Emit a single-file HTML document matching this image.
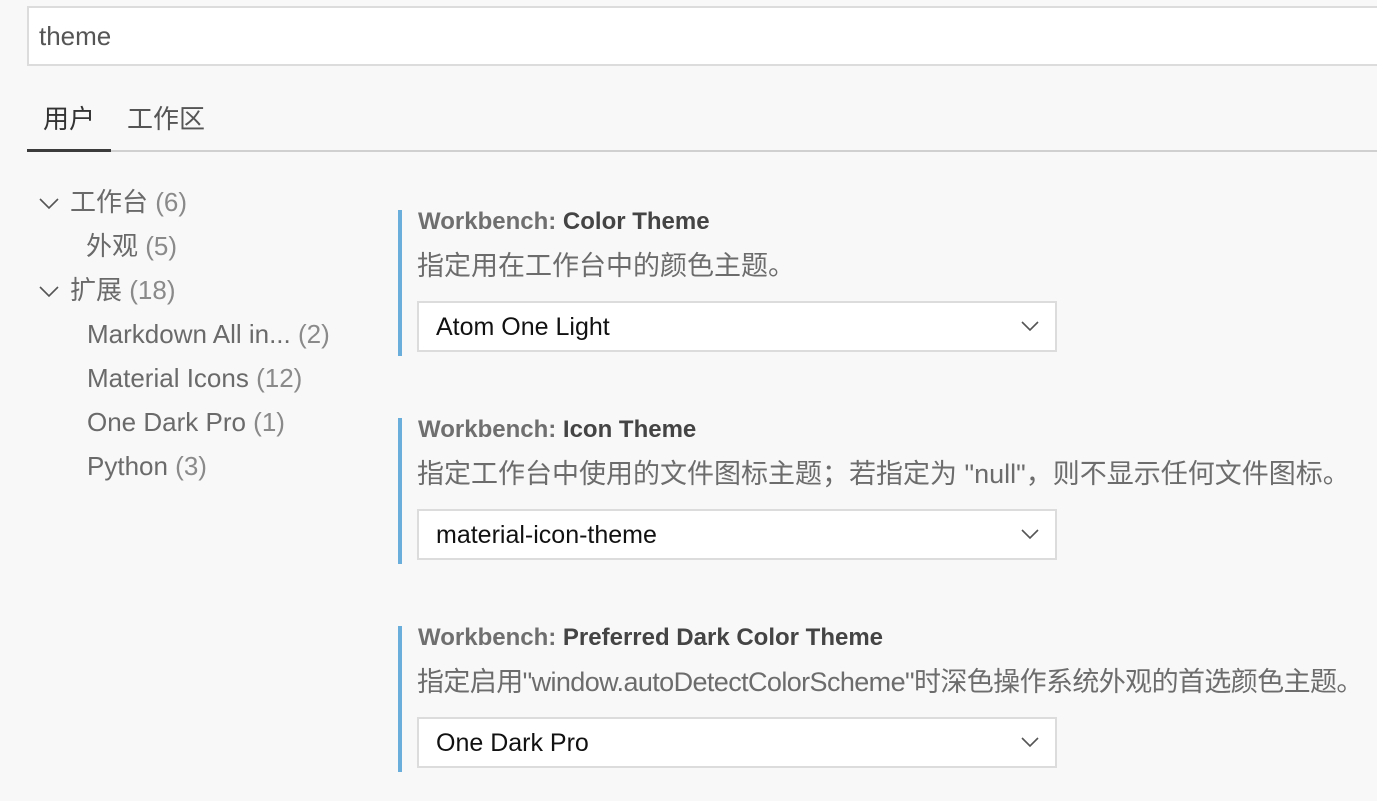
<!DOCTYPE html>
<html><head><meta charset="utf-8"><style>
*{margin:0;padding:0;box-sizing:border-box}
body{width:1377px;height:801px;background:#f8f8f8;font-family:"Liberation Sans","Noto Sans CJK SC",sans-serif;overflow:hidden;position:relative;color:#616161}
.a{position:absolute;white-space:nowrap;line-height:1.2}
.search{left:27px;top:6px;width:1360px;height:60px;background:#fff;border:2px solid #dcdcdc}
.search span{position:absolute;left:10px;top:13px;font-size:26px;color:#555}
.tab{font-size:26px;top:104px}
.tree{font-size:26px;color:#6a6a6a}
.tree .c{color:#8a8a8a}
.bar{left:398px;width:4px;background:#6aaedc;height:146px}
.title{font-size:24px;font-weight:bold;color:#444;left:418px}
.title span{color:#6f6f6f}
.desc{font-size:27px;color:#6c6c6c;left:417px}
.sel{left:417px;width:640px;height:51px;background:#fff;border:2px solid #dcdcdc;font-size:25px;color:#111}
.sel span{position:absolute;left:17px;top:9px}
.sel svg{position:absolute;right:16px;top:17px}
.chev{position:absolute}
</style></head><body>
<div class="a search"><span>theme</span></div>
<div class="a tab" style="left:43px;color:#333">用户</div>
<div class="a tab" style="left:127px;color:#555">工作区</div>
<div class="a" style="left:27px;top:150px;width:1350px;height:2px;background:#d0d0d0"></div>
<div class="a" style="left:27px;top:149px;width:84px;height:3px;background:#3c3c3c"></div>

<svg class="chev" style="left:38px;top:197px" width="22" height="14"><path d="M2 2 L11 11 L20 2" fill="none" stroke="#555" stroke-width="1.6"/></svg>
<div class="a tree" style="left:70px;top:187px">工作台 <span class="c">(6)</span></div>
<div class="a tree" style="left:86px;top:231px">外观 <span class="c">(5)</span></div>
<svg class="chev" style="left:38px;top:285px" width="22" height="14"><path d="M2 2 L11 11 L20 2" fill="none" stroke="#555" stroke-width="1.6"/></svg>
<div class="a tree" style="left:70px;top:275px">扩展 <span class="c">(18)</span></div>
<div class="a tree" style="left:87px;top:319px">Markdown All in... <span class="c">(2)</span></div>
<div class="a tree" style="left:87px;top:363px">Material Icons <span class="c">(12)</span></div>
<div class="a tree" style="left:87px;top:407px">One Dark Pro <span class="c">(1)</span></div>
<div class="a tree" style="left:87px;top:451px">Python <span class="c">(3)</span></div>

<div class="a bar" style="top:210px"></div>
<div class="a title" style="top:208px"><span>Workbench: </span>Color Theme</div>
<div class="a desc" style="top:250px">指定用在工作台中的颜色主题。</div>
<div class="a sel" style="top:301px"><span>Atom One Light</span><svg width="18" height="12"><path d="M1 2 L9 10 L17 2" fill="none" stroke="#555" stroke-width="1.6"/></svg></div>

<div class="a bar" style="top:418px"></div>
<div class="a title" style="top:416px"><span>Workbench: </span>Icon Theme</div>
<div class="a desc" style="top:458px">指定工作台中使用的文件图标主题；若指定为 "null"，则不显示任何文件图标。</div>
<div class="a sel" style="top:509px"><span>material-icon-theme</span><svg width="18" height="12"><path d="M1 2 L9 10 L17 2" fill="none" stroke="#555" stroke-width="1.6"/></svg></div>

<div class="a bar" style="top:626px"></div>
<div class="a title" style="top:624px"><span>Workbench: </span>Preferred Dark Color Theme</div>
<div class="a desc" style="top:666px;letter-spacing:-0.6px">指定启用"window.autoDetectColorScheme"时深色操作系统外观的首选颜色主题。</div>
<div class="a sel" style="top:717px"><span>One Dark Pro</span><svg width="18" height="12"><path d="M1 2 L9 10 L17 2" fill="none" stroke="#555" stroke-width="1.6"/></svg></div>
</body></html>
